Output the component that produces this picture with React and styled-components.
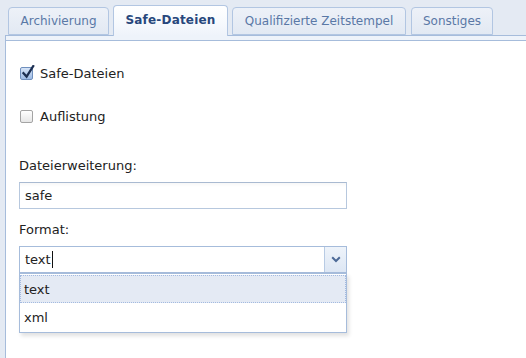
import React from "react";
import styled, { createGlobalStyle } from "styled-components";

const Global = createGlobalStyle`
  html, body { margin: 0; padding: 0; }
  body {
    width: 526px; height: 358px; overflow: hidden;
    background: #e4eaf3;
    font-family: "DejaVu Sans", Verdana, sans-serif;
  }
`;

const Page = styled.div`
  width: 526px;
  height: 358px;
  display: flex;
  flex-direction: column;
  padding-left: 5px;
  box-sizing: border-box;
  background: #e4eaf3;
`;

const TabBar = styled.div`
  height: 36px;
  box-sizing: border-box;
  display: flex;
  align-items: flex-end;
  gap: 4px;
  padding-left: 3px;
  border-bottom: 1px solid #a6bcdb;
`;

const Tab = styled.div`
  box-sizing: border-box;
  height: ${(p) => (p.$active ? "31px" : "28px")};
  margin-bottom: ${(p) => (p.$active ? "-1px" : "0")};
  margin-left: ${(p) => p.$ml || 0}px;
  width: ${(p) => p.$w}px;
  display: flex;
  align-items: center;
  justify-content: center;
  padding-bottom: ${(p) => (p.$active ? "3px" : "0")};
  border: 1px solid #b2c6e2;
  border-bottom: ${(p) => (p.$active ? "none" : "1px solid #b2c6e2")};
  border-radius: 4px 4px 0 0;
  background: ${(p) =>
    p.$active
      ? "linear-gradient(#ffffff, #f6f9fd 60%, #eef3fa)"
      : "linear-gradient(#edf1f8, #e2e9f3)"};
  color: ${(p) => (p.$active ? "#27477c" : "#5a78a6")};
  font-size: 12px;
  font-weight: ${(p) => (p.$active ? 700 : 400)};
  letter-spacing: ${(p) => (p.$active ? "0.2px" : "0")};
  white-space: nowrap;
`;

const Band = styled.div`
  height: 4px;
  background: #eef3fa;
  border-left: 1px solid #a6bcdb;
`;

const Panel = styled.div`
  flex: 1;
  position: relative;
  background: #ffffff;
  border-top: 1px solid #a6bcdb;
  border-left: 1px solid #a6bcdb;
  padding: 22px 0 0 13px;
  display: flex;
  flex-direction: column;
  align-items: flex-start;
  color: #222;
  font-size: 13px;
`;

const CheckRow = styled.label`
  height: 20px;
  display: flex;
  align-items: center;
  gap: 7px;
  margin-left: 1px;
  margin-top: ${(p) => p.$mt || 0}px;
  color: #222;
`;

const Box = styled.span`
  position: relative;
  width: 13px;
  height: 13px;
  box-sizing: border-box;
  border-radius: 2px;
  border: 1px solid ${(p) => (p.$checked ? "#6f8fbd" : "#a4a4a4")};
  background: ${(p) =>
    p.$checked
      ? "linear-gradient(#d6e4f7, #9dbbe6)"
      : "linear-gradient(#ffffff, #e6e6e6)"};
  display: inline-block;
`;

const Tick = styled.svg`
  position: absolute;
  left: 1px;
  top: -3px;
`;

const FieldLabel = styled.div`
  line-height: 16px;
  margin-top: ${(p) => p.$mt}px;
`;

const Input = styled.div`
  box-sizing: border-box;
  width: 328px;
  height: 27px;
  margin-top: 8px;
  border: 1px solid #b7c8de;
  border-top-color: #a9bad1;
  background: linear-gradient(#f7f7f7, #ffffff 4px);
  display: flex;
  align-items: center;
  padding-left: 5px;
`;

const ComboWrap = styled.div`
  position: relative;
  margin-top: 8px;
`;

const Combo = styled.div`
  box-sizing: border-box;
  width: 328px;
  height: 27px;
  display: flex;
  border: 1px solid #a6bcdb;
  background: #fff;
`;

const ComboText = styled.div`
  flex: 1;
  display: flex;
  align-items: center;
  padding-left: 5px;
`;

const Caret = styled.span`
  display: inline-block;
  width: 0;
  height: 17px;
  border-left: 1px solid #111;
  margin-left: 1px;
`;

const Trigger = styled.div`
  width: 21px;
  border-left: 1px solid #b8cbe4;
  background: linear-gradient(#eef3fa, #dde7f4);
  display: flex;
  align-items: center;
  justify-content: center;
`;

const List = styled.div`
  position: absolute;
  left: 0;
  top: 27px;
  width: 328px;
  box-sizing: border-box;
  border: 1px solid #a6bcdb;
  background: #fff;
  padding: 1px 0;
  box-shadow: 2px 3px 4px rgba(0, 0, 0, 0.12);
`;

const Item = styled.div`
  height: 28px;
  box-sizing: border-box;
  display: flex;
  align-items: center;
  padding-left: 3px;
  background: ${(p) => (p.$selected ? "#e4eaf4" : "transparent")};
  border: 1px dotted ${(p) => (p.$selected ? "#a3bae0" : "transparent")};
  color: #222;
`;

export default function App() {
  return (
    <>
      <Global />
      <Page>
        <TabBar>
          <Tab $w={101}>Archivierung</Tab>
          <Tab $w={115} $active>Safe-Dateien</Tab>
          <Tab $w={174}>Qualifizierte Zeitstempel</Tab>
          <Tab $w={82} $ml={1}>Sonstiges</Tab>
        </TabBar>
        <Band />
        <Panel>
          <CheckRow>
            <Box $checked>
              <Tick width="13" height="14" viewBox="0 0 13 14">
                <path
                  d="M1.5 8.2 L4.6 11.6 L11.2 1.2"
                  fill="none"
                  stroke="#1c2f52"
                  strokeWidth="2.3"
                  strokeLinecap="square"
                  strokeLinejoin="miter"
                />
              </Tick>
            </Box>
            Safe-Dateien
          </CheckRow>
          <CheckRow $mt={23}>
            <Box />
            Auflistung
          </CheckRow>
          <FieldLabel $mt={32}>Dateierweiterung:</FieldLabel>
          <Input>safe</Input>
          <FieldLabel $mt={13}>Format:</FieldLabel>
          <ComboWrap>
            <Combo>
              <ComboText>
                text<Caret />
              </ComboText>
              <Trigger>
                <svg width="10" height="7" viewBox="0 0 10 7">
                  <path
                    d="M1.2 1.3 L5 5 L8.8 1.3"
                    fill="none"
                    stroke="#4d6a97"
                    strokeWidth="2"
                  />
                </svg>
              </Trigger>
            </Combo>
            <List>
              <Item $selected>text</Item>
              <Item>xml</Item>
            </List>
          </ComboWrap>
        </Panel>
      </Page>
    </>
  );
}
